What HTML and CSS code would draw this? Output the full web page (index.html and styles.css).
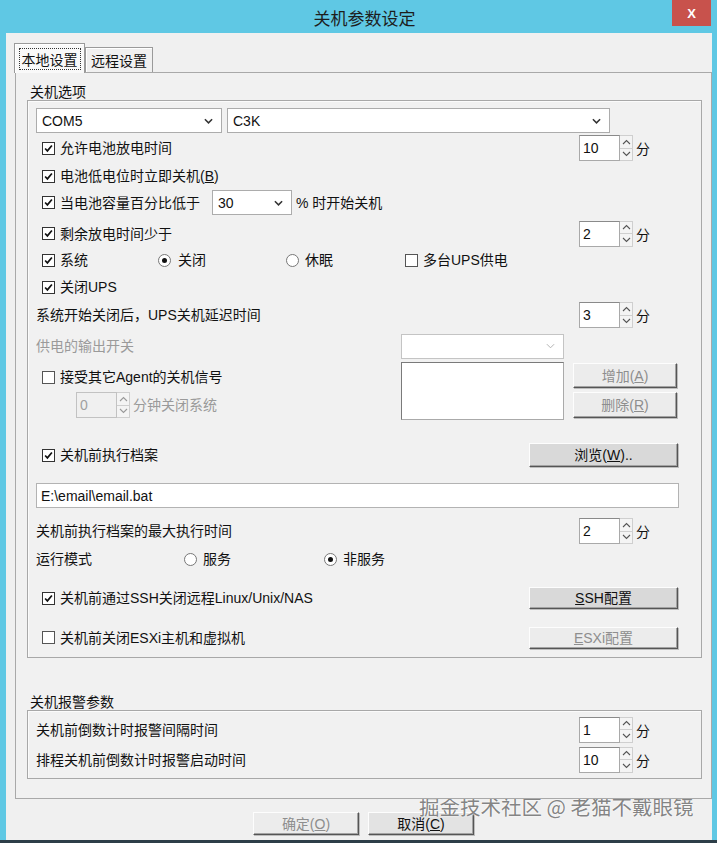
FILE: index.html
```html
<!DOCTYPE html>
<html lang="zh-CN">
<head>
<meta charset="utf-8">
<title>关机参数设定</title>
<link rel="stylesheet" href="styles.css">
</head>
<body>
<div class="window">
  <div class="titlebar">
    <span class="title">关机参数设定</span>
    <span class="close">X</span>
  </div>
  <div class="client">
    <div class="tabs">
      <div class="tab active"><span class="focus">本地设置</span></div>
      <div class="tab">远程设置</div>
    </div>
    <div class="tabpage">
      <div class="glabel">关机选项</div>
      <div class="gbox g1">
        <div class="row mt7 h25">
          <div class="combo w186"><span class="val">COM5</span><svg class="chev" viewBox="0 0 10 6"><path d="M1 1L5 5L9 1"/></svg></div>
          <div class="combo w383 ml5"><span class="val">C3K</span><svg class="chev" viewBox="0 0 10 6"><path d="M1 1L5 5L9 1"/></svg></div>
        </div>
        <div class="row mt2 h26">
          <label class="chk"><span class="cb"><svg viewBox="0 0 13 13"><path d="M2.5 6.5L5.2 9.3L10.5 3"/></svg></span>允许电池放电时间</label>
          <div class="spin push"><span class="sbox">10</span><span class="arrows"><span class="arr"><svg viewBox="0 0 11 10"><path d="M2 7L5.5 3.5L9 7"/></svg></span><span class="arr"><svg viewBox="0 0 11 10"><path d="M2 3L5.5 6.5L9 3"/></svg></span></span><span class="unit">分</span></div>
        </div>
        <div class="row mt2 h26">
          <label class="chk"><span class="cb"><svg viewBox="0 0 13 13"><path d="M2.5 6.5L5.2 9.3L10.5 3"/></svg></span>电池低电位时立即关机(<u>B</u>)</label>
        </div>
        <div class="row mt0 h27">
          <label class="chk"><span class="cb"><svg viewBox="0 0 13 13"><path d="M2.5 6.5L5.2 9.3L10.5 3"/></svg></span>当电池容量百分比低于</label>
          <div class="combo w80 ml12 h27"><span class="val">30</span><svg class="chev" viewBox="0 0 10 6"><path d="M1 1L5 5L9 1"/></svg></div>
          <span class="ml4">% 时开始关机</span>
        </div>
        <div class="row mt4 h27">
          <label class="chk"><span class="cb"><svg viewBox="0 0 13 13"><path d="M2.5 6.5L5.2 9.3L10.5 3"/></svg></span>剩余放电时间少于</label>
          <div class="spin push"><span class="sbox">2</span><span class="arrows"><span class="arr"><svg viewBox="0 0 11 10"><path d="M2 7L5.5 3.5L9 7"/></svg></span><span class="arr"><svg viewBox="0 0 11 10"><path d="M2 3L5.5 6.5L9 3"/></svg></span></span><span class="unit">分</span></div>
        </div>
        <div class="row mt0 h26">
          <label class="chk w116"><span class="cb"><svg viewBox="0 0 13 13"><path d="M2.5 6.5L5.2 9.3L10.5 3"/></svg></span>系统</label>
          <label class="rad w128"><span class="rb on"></span>关闭</label>
          <label class="rad w119"><span class="rb"></span>休眠</label>
          <label class="chk flat"><span class="cb off"></span>多台UPS供电</label>
        </div>
        <div class="row mt1 h26">
          <label class="chk"><span class="cb"><svg viewBox="0 0 13 13"><path d="M2.5 6.5L5.2 9.3L10.5 3"/></svg></span>关闭UPS</label>
        </div>
        <div class="row mt2 h26">
          <span>系统开始关闭后，UPS关机延迟时间</span>
          <div class="spin push"><span class="sbox">3</span><span class="arrows"><span class="arr"><svg viewBox="0 0 11 10"><path d="M2 7L5.5 3.5L9 7"/></svg></span><span class="arr"><svg viewBox="0 0 11 10"><path d="M2 3L5.5 6.5L9 3"/></svg></span></span><span class="unit">分</span></div>
        </div>
        <div class="row mt5 h26">
          <span class="w365 dis">供电的输出开关</span>
          <div class="combo w163 h26 disabled"><span class="val"></span><svg class="chev" viewBox="0 0 10 6"><path d="M1 1L5 5L9 1"/></svg></div>
        </div>
        <div class="row top mt3 h58">
          <div class="w365 col">
            <label class="chk mt7l"><span class="cb off"></span>接受其它Agent的关机信号</label>
            <div class="dspin">
              <div class="spin dspin-inner"><span class="sbox dsb">0</span><span class="arrows"><span class="arr"><svg viewBox="0 0 11 10"><path d="M2 7L5.5 3.5L9 7"/></svg></span><span class="arr"><svg viewBox="0 0 11 10"><path d="M2 3L5.5 6.5L9 3"/></svg></span></span><span class="dis sunit">分钟关闭系统</span></div>
            </div>
          </div>
          <div class="listbox"></div>
          <div class="btncol">
            <div class="btn btn-add dis-btn">增加(<u>A</u>)</div>
            <div class="btn btn-del dis-btn">删除(<u>R</u>)</div>
          </div>
        </div>
        <div class="row mt23 h24">
          <label class="chk"><span class="cb"><svg viewBox="0 0 13 13"><path d="M2.5 6.5L5.2 9.3L10.5 3"/></svg></span>关机前执行档案</label>
          <div class="btn big push-btn h24">浏览(<u>W</u>)..</div>
        </div>
        <div class="row mt16 h25">
          <div class="textbox">E:\email\email.bat</div>
        </div>
        <div class="row mt10 h26">
          <span>关机前执行档案的最大执行时间</span>
          <div class="spin push"><span class="sbox">2</span><span class="arrows"><span class="arr"><svg viewBox="0 0 11 10"><path d="M2 7L5.5 3.5L9 7"/></svg></span><span class="arr"><svg viewBox="0 0 11 10"><path d="M2 3L5.5 6.5L9 3"/></svg></span></span><span class="unit">分</span></div>
        </div>
        <div class="row mt2 h26">
          <span class="w148">运行模式</span>
          <label class="rad w140"><span class="rb"></span>服务</label>
          <label class="rad"><span class="rb on"></span>非服务</label>
        </div>
        <div class="row mt14 h24">
          <label class="chk"><span class="cb"><svg viewBox="0 0 13 13"><path d="M2.5 6.5L5.2 9.3L10.5 3"/></svg></span>关机前通过SSH关闭远程Linux/Unix/NAS</label>
          <div class="btn big push-btn h22"><u>S</u>SH配置</div>
        </div>
        <div class="row mt16 h23">
          <label class="chk"><span class="cb off"></span>关机前关闭ESXi主机和虚拟机</label>
          <div class="btn big push-btn h22 dis-btn"><u>E</u>SXi配置</div>
        </div>
      </div>

      <div class="glabel g2label">关机报警参数</div>
      <div class="gbox g2">
        <div class="row mt6 h25">
          <span>关机前倒数计时报警间隔时间</span>
          <div class="spin push h25"><span class="sbox">1</span><span class="arrows"><span class="arr"><svg viewBox="0 0 11 10"><path d="M2 7L5.5 3.5L9 7"/></svg></span><span class="arr"><svg viewBox="0 0 11 10"><path d="M2 3L5.5 6.5L9 3"/></svg></span></span><span class="unit">分</span></div>
        </div>
        <div class="row mt5 h25">
          <span>排程关机前倒数计时报警启动时间</span>
          <div class="spin push h25"><span class="sbox">10</span><span class="arrows"><span class="arr"><svg viewBox="0 0 11 10"><path d="M2 7L5.5 3.5L9 7"/></svg></span><span class="arr"><svg viewBox="0 0 11 10"><path d="M2 3L5.5 6.5L9 3"/></svg></span></span><span class="unit">分</span></div>
        </div>
      </div>
    </div>
    <div class="actions">
      <div class="btn act dis-btn">确定(<u>O</u>)</div>
      <div class="btn act">取消(<u>C</u>)</div>
    </div>
  </div>
  <div class="taskbar"></div>
  <div class="watermark">掘金技术社区 @ 老猫不戴眼镜</div>
</div>
</body>
</html>
```
FILE: styles.css
```css
* { box-sizing: border-box; }
html, body { margin: 0; padding: 0; }
body {
  width: 717px;
  height: 843px;
  overflow: hidden;
  background: #5fc8e4;
  font-family: "Liberation Sans", "Noto Sans CJK SC", sans-serif;
  font-size: 14px;
  color: #111;
}
u { text-decoration: underline; text-underline-offset: 1px; }

.window {
  position: relative;
  width: 717px;
  height: 843px;
  display: flex;
  flex-direction: column;
}

.titlebar {
  height: 33px;
  flex-shrink: 0;
  display: flex;
  align-items: center;
  justify-content: center;
  position: relative;
  padding-left: 12px;
  padding-top: 2px;
}
.title {
  font-family: "Noto Sans CJK SC", sans-serif;
  font-size: 17px;
  color: #1d1d1d;
}
.close {
  position: absolute;
  right: 6px;
  top: 0;
  width: 39px;
  height: 26px;
  background: #c8524c;
  color: #fff;
  font-weight: bold;
  font-size: 13px;
  display: flex;
  align-items: center;
  justify-content: center;
}

.client {
  flex: 1;
  margin: 0 5px 0 6px;
  background: #f0f0f0;
  padding-top: 10px;
  display: flex;
  flex-direction: column;
}

.tabs {
  height: 29px;
  display: flex;
  align-items: flex-end;
  padding-left: 8px;
  position: relative;
  z-index: 2;
  flex-shrink: 0;
}
.tab {
  height: 25px;
  width: 68px;
  border: 1px solid #9a9a9a;
  border-bottom: none;
  background: #f0f0f0;
  display: flex;
  align-items: center;
  justify-content: center;
  font-family: "Noto Sans CJK SC", sans-serif;
  font-size: 14px;
  box-shadow: inset 1px 1px #fff;
}
.tab.active {
  height: 30px;
  width: 71px;
  margin-bottom: -1px;
  background: #f9f9f9;
}
.focus {
  border: 1px dotted #333;
  padding: 1px 2px;
  line-height: 18px;
}

.tabpage {
  margin-left: 9px;
  width: 697px;
  border: 1px solid #a9a9a9;
  background: #f1f1f1;
  padding-bottom: 19px;
  flex-shrink: 0;
  position: relative;
  z-index: 1;
}

.glabel {
  margin: 11px 0 0 14px;
  height: 16px;
  line-height: 16px;
}
.g2label { margin-top: 36px; }

.gbox {
  margin: 0 9px 0 11px;
  border: 1px solid #a8a8a8;
  box-shadow: inset 1px 1px #fbfbfb;
  display: flex;
  flex-direction: column;
}
.g1 { height: 558px; }
.g2 { height: 69px; }

.row {
  display: flex;
  align-items: center;
  padding-left: 8px;
  flex-shrink: 0;
  line-height: 18px;
  white-space: nowrap;
}
.row.top { align-items: flex-start; }

.mt0 { margin-top: 0; }
.mt1 { margin-top: 1px; }
.mt2 { margin-top: 2px; }
.mt3 { margin-top: 3px; }
.mt4 { margin-top: 4px; }
.mt5 { margin-top: 5px; }
.mt6 { margin-top: 6px; }
.mt7 { margin-top: 7px; }
.mt10 { margin-top: 10px; }
.mt14 { margin-top: 14px; }
.mt16 { margin-top: 16px; }
.mt23 { margin-top: 23px; }
.h22 { height: 22px; }
.h23 { height: 23px; }
.h24 { height: 24px; }
.h25 { height: 25px; }
.h26 { height: 26px; }
.h27 { height: 27px; }
.h58 { height: 58px; }
.ml4 { margin-left: 4px; }
.ml5 { margin-left: 5px; }
.ml12 { margin-left: 12px; }
.w80 { width: 80px; }
.w116 { width: 116px; }
.w119 { width: 119px; }
.w128 { width: 128px; }
.w140 { width: 140px; }
.w148 { width: 148px; }
.w163 { width: 163px; }
.w186 { width: 186px; }
.w365 { width: 365px; flex-shrink: 0; }
.w383 { width: 383px; }

.dis { color: #9a9a9a; }

/* checkbox */
.chk {
  display: flex;
  align-items: center;
  margin-left: 6px;
  flex-shrink: 0;
}
.chk.flat { margin-left: 0; }
.cb {
  width: 13px;
  height: 13px;
  border: 1px solid #333;
  background: #fff;
  margin-right: 5px;
  display: flex;
  align-items: center;
  justify-content: center;
  flex-shrink: 0;
}
.cb.off { border-color: #555; }
.cb svg { width: 13px; height: 13px; }
.cb svg path { fill: none; stroke: #111; stroke-width: 2; }

/* radio */
.rad {
  display: flex;
  align-items: center;
  flex-shrink: 0;
}
.rb {
  width: 13px;
  height: 13px;
  border-radius: 50%;
  border: 1px solid #777;
  background: #fff;
  margin-right: 6px;
  display: flex;
  align-items: center;
  justify-content: center;
}
.w128 .rb { margin-right: 7px; }
.rb.on::after {
  content: "";
  width: 5px;
  height: 5px;
  border-radius: 50%;
  background: #111;
}

/* combo */
.combo {
  height: 25px;
  border: 1px solid #acacac;
  background: #fff;
  display: flex;
  align-items: center;
  justify-content: space-between;
  padding: 0 8px 0 5px;
  flex-shrink: 0;
}
.combo .val { line-height: 18px; }
.chev { width: 9px; height: 6px; }
.chev path { fill: none; stroke: #333; stroke-width: 1.7; }
.combo.disabled { border-color: #c4c4c4; }
.combo.disabled .chev path { stroke: #aaa; stroke-width: 1; }

/* spinner */
.spin {
  display: flex;
  align-items: stretch;
  height: 26px;
  flex-shrink: 0;
}
.push { margin-left: auto; margin-right: 51px; }
.sbox {
  width: 41px;
  border: 1px solid #a9a9a9;
  border-top-color: #8a8a8a;
  background: #fff;
  padding-left: 3px;
  display: flex;
  align-items: center;
}
.arrows {
  width: 13px;
  display: flex;
  flex-direction: column;
  border: 1px solid #cfcfcf;
  border-left: none;
  background: #f4f4f4;
}
.arr {
  flex: 1;
  display: flex;
  align-items: center;
  justify-content: center;
}
.arr + .arr { border-top: 1px solid #cfcfcf; }
.arr svg { width: 11px; height: 10px; }
.arr path { fill: none; stroke: #555; stroke-width: 1.1; }
.unit {
  margin-left: 3px;
  width: 14px;
  display: flex;
  align-items: center;
  font-family: "Noto Sans CJK SC", sans-serif;
}

/* agent block */
.col { display: flex; flex-direction: column; }
.mt7l { margin-top: 7px; height: 16px; }
.dspin { margin-top: 7px; margin-left: 40px; display: flex; }
.dsb { background: #f0f0f0; color: #a0a0a0; border-color: #c2c2c2; }
.dspin .arr path { stroke: #999; }
.sunit { margin-left: 3px; display: flex; align-items: center; }
.listbox {
  width: 163px;
  height: 58px;
  border: 1px solid #7a7a7a;
  border-right-color: #aaa;
  border-bottom-color: #aaa;
  background: #fff;
  flex-shrink: 0;
}
.btncol {
  margin-left: 9px;
  width: 104px;
  display: flex;
  flex-direction: column;
}

/* buttons */
.btn {
  background: #e1e1e1;
  border: 1px solid;
  border-color: #fdfdfd #555 #555 #fdfdfd;
  box-shadow: inset -1px -1px #a3a3a3, 1px 1px 0 #bdbdbd;
  display: flex;
  align-items: center;
  justify-content: center;
  line-height: 16px;
  flex-shrink: 0;
  color: #111;
}
.dis-btn { color: #8e8e8e; background: #ececec; }
.btn-add { margin-top: 1px; height: 25px; }
.btn-del { margin-top: 4px; height: 26px; }
.big { width: 149px; background: #d9d9d9; }
.big.dis-btn { background: #ececec; }
.push-btn { margin-left: auto; margin-right: 23px; }

.textbox {
  width: 643px;
  height: 25px;
  border: 1px solid #b3b3b3;
  background: #fff;
  padding-left: 4px;
  display: flex;
  align-items: center;
}

.actions {
  margin-top: 13px;
  padding-left: 247px;
  display: flex;
  gap: 9px;
}
.act { width: 106px; height: 23px; background: #e3e3e3; }
.act.dis-btn { background: #ececec; }

.taskbar {
  height: 3px;
  background: #2d3e48;
  flex-shrink: 0;
}

.watermark {
  position: absolute;
  left: 419px;
  top: 792px;
  font-family: "Noto Sans CJK SC", sans-serif;
  font-size: 20.5px;
  line-height: 28px;
  color: rgba(110, 110, 110, 0.85);
  text-shadow: 0 0 2px #fff, 0 0 1px #fff;
  white-space: nowrap;
}
```
